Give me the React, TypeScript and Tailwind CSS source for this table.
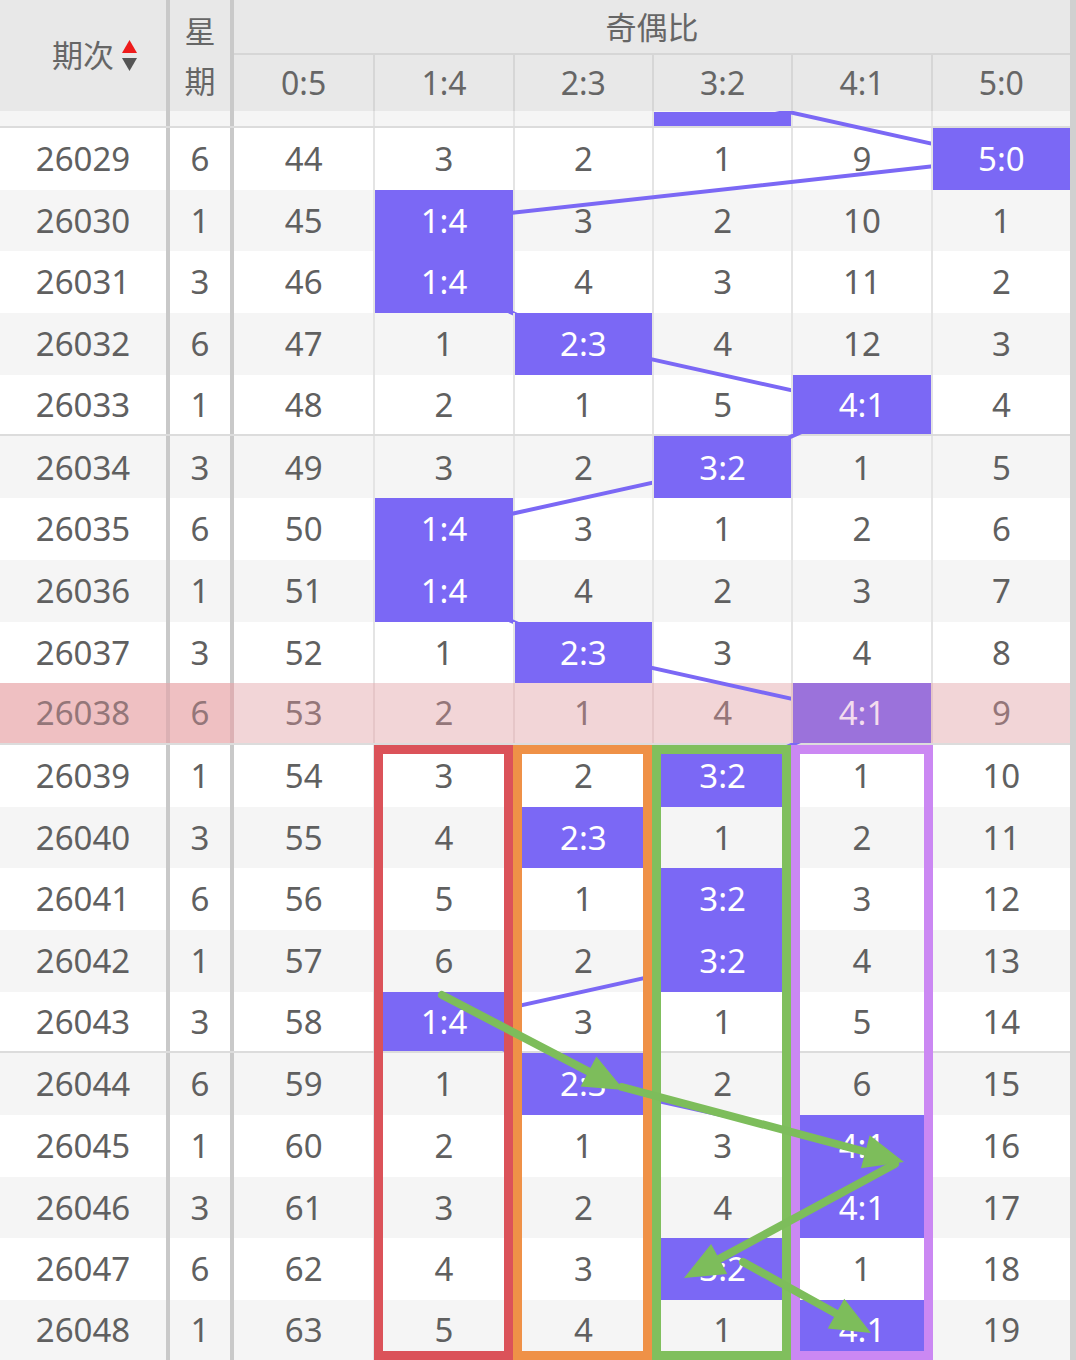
import React from 'react';

const ROW_H = 61.7;
const TOP = 17; // visible bottom of the row above 26029
const COLS = ['0:5', '1:4', '2:3', '3:2', '4:1', '5:0'];
const COL_X = [303.7, 443, 582.3, 721.7, 861, 1000.3];

// period, weekday, then six ratio columns ('*' = the drawn ratio)
const raw = [
  '26029 6 44 3 2 1 9 *',
  '26030 1 45 * 3 2 10 1',
  '26031 3 46 * 4 3 11 2',
  '26032 6 47 1 * 4 12 3',
  '26033 1 48 2 1 5 * 4',
  '26034 3 49 3 2 * 1 5',
  '26035 6 50 * 3 1 2 6',
  '26036 1 51 * 4 2 3 7',
  '26037 3 52 1 * 3 4 8',
  '26038 6 53 2 1 4 * 9',
  '26039 1 54 3 2 * 1 10',
  '26040 3 55 4 * 1 2 11',
  '26041 6 56 5 1 * 3 12',
  '26042 1 57 6 2 * 4 13',
  '26043 3 58 * 3 1 5 14',
  '26044 6 59 1 * 2 6 15',
  '26045 1 60 2 1 3 * 16',
  '26046 3 61 3 2 4 * 17',
  '26047 6 62 4 3 * 1 18',
  '26048 1 63 5 4 1 * 19',
];

const rows = raw.map((line) => {
  const [no, wk, ...cells] = line.split(' ');
  return { no, wk, cells, hit: cells.indexOf('*') };
});

const HIGHLIGHT = '26038';
const GRID = 'grid grid-cols-[166px_68px_repeat(6,minmax(0,1fr))]';

// centres of the drawn cells, the first one is the half-hidden row 26028 (3:2)
const points: [number, number][] = [
  [COL_X[3], TOP - ROW_H / 2],
  ...rows.map((r, i) => [COL_X[r.hit], TOP + i * ROW_H + ROW_H / 2] as [number, number]),
];

const arrows: [number, number, number, number][] = [
  [442, 995, 624, 1090],
  [622, 1087, 904, 1162],
  [895, 1164, 684, 1278],
  [743, 1262, 871, 1333],
];

function Arrow({ a }: { a: [number, number, number, number] }) {
  const [x1, y1, x2, y2] = a;
  const len = Math.hypot(x2 - x1, y2 - y1);
  const ux = (x2 - x1) / len;
  const uy = (y2 - y1) / len;
  const head = 40;
  const half = 17;
  const bx = x2 - ux * head;
  const by = y2 - uy * head;
  const pts = `${x2},${y2} ${bx - uy * half},${by + ux * half} ${bx + uy * half},${by - ux * half}`;
  return (
    <g>
      <line x1={x1} y1={y1} x2={bx + ux * 4} y2={by + uy * 4} stroke="#7dbd5b" strokeWidth={8} strokeLinecap="round" />
      <polygon points={pts} fill="#7dbd5b" />
    </g>
  );
}

function SortIcon() {
  return (
    <svg width="15" height="32" viewBox="0 0 15 32" className="ml-2 -mr-[23px]">
      <polygon points="7.5,0 15,13 0,13" fill="#ee1b1b" />
      <polygon points="0,18 15,18 7.5,31" fill="#555555" />
    </svg>
  );
}

export default function App() {
  return (
    <div className="relative w-[1076px] h-[1360px] overflow-hidden bg-white flex font-['Noto_Sans','Noto_Sans_CJK_SC',sans-serif]">
      <div className="w-[1070px] flex flex-col">
        {/* header */}
        <div className={`${GRID} grid-rows-[55px_56px] h-[111px] bg-[#e8e8e8] text-[#666] text-[31px] shrink-0`}>
          <div className="row-span-2 flex items-center justify-center">
            <span>期次</span>
            <SortIcon />
          </div>
          <div className="row-span-2 border-x-4 border-[#c9c9c9] flex flex-col items-center justify-center leading-[50px]">
            <span>星</span>
            <span>期</span>
          </div>
          <div className="col-span-6 border-b-2 border-[#d6d6d6] flex items-center justify-center pt-[2px]">奇偶比</div>
          {COLS.map((c, i) => (
            <div
              key={c}
              className={`flex items-center justify-center text-[32px] ${i > 0 ? 'border-l-2 border-[#d6d6d6]' : ''}`}
            >
              {c}
            </div>
          ))}
        </div>

        {/* body */}
        <div className="relative flex-1 overflow-hidden text-[33px] text-[#606060]">
          <div className={`${GRID} h-[17px] bg-[#f5f5f5] border-b-2 border-[#dcdcdc]`}>
            <div />
            <div className="border-x-4 border-[#c9c9c9]" />
            {COLS.map((c, i) => (
              <div key={c} className={`${i > 0 ? 'border-l-2 border-[#e4e4e4]' : ''}`}>
                {i === 3 && <div className="relative z-20 h-[14px] mt-[1px] bg-[#7b68f5]" />}
              </div>
            ))}
          </div>

          {rows.map((r, idx) => {
            const hl = r.no === HIGHLIGHT;
            const stripe = hl ? 'bg-[#f2d5d7]' : idx % 2 === 0 ? 'bg-white' : 'bg-[#f5f5f5]';
            const sep = idx % 5 === 4 ? 'border-b-2 border-b-[#dcdcdc]' : '';
            return (
              <div key={r.no} className={`${GRID} h-[61.7px] ${stripe} ${sep} ${hl ? 'text-[#947679]' : ''}`}>
                <div className={`flex items-center justify-center ${hl ? 'bg-[#efc0c2]' : ''}`}>{r.no}</div>
                <div
                  className={`flex items-center justify-center border-x-4 ${
                    hl ? 'bg-[#efc0c2] border-[#dcb1b4]' : 'border-[#c9c9c9]'
                  }`}
                >
                  {r.wk}
                </div>
                {r.cells.map((v, i) => {
                  const line = i > 0 ? `border-l-2 ${hl ? 'border-[#e6c6c8]' : 'border-[#e4e4e4]'}` : '';
                  if (v === '*') {
                    return (
                      <div
                        key={i}
                        className={`relative z-20 flex items-center justify-center ${line} ${
                          hl ? 'bg-[#9b72db] text-[#f3dcee]' : 'bg-[#7b68f5] text-white'
                        }`}
                      >
                        {COLS[i]}
                      </div>
                    );
                  }
                  return (
                    <div key={i} className={`flex items-center justify-center ${line}`}>
                      {v}
                    </div>
                  );
                })}
              </div>
            );
          })}

          <svg className="absolute inset-0 z-10 pointer-events-none" width="1070" height="1249">
            <polyline
              points={points.map((p) => p.join(',')).join(' ')}
              fill="none"
              stroke="#7b68f5"
              strokeWidth={4}
            />
          </svg>
        </div>
      </div>
      <div className="w-[6px] bg-[#d0d0d0]" />

      {/* marked columns */}
      <div className="absolute z-30 top-[745px] left-[374px] w-[139px] h-[615px] border-[9px] border-[#db5259]" />
      <div className="absolute z-30 top-[745px] left-[513px] w-[139px] h-[615px] border-[9px] border-[#ef9147]" />
      <div className="absolute z-30 top-[745px] left-[652px] w-[139px] h-[615px] border-[9px] border-[#80bf5d]" />
      <div className="absolute z-30 top-[745px] left-[791px] w-[142px] h-[615px] border-[9px] border-[#cb88f3]" />

      <svg className="absolute inset-0 z-40 pointer-events-none" width="1076" height="1360">
        {arrows.map((a, i) => (
          <Arrow key={i} a={a} />
        ))}
      </svg>
    </div>
  );
}
